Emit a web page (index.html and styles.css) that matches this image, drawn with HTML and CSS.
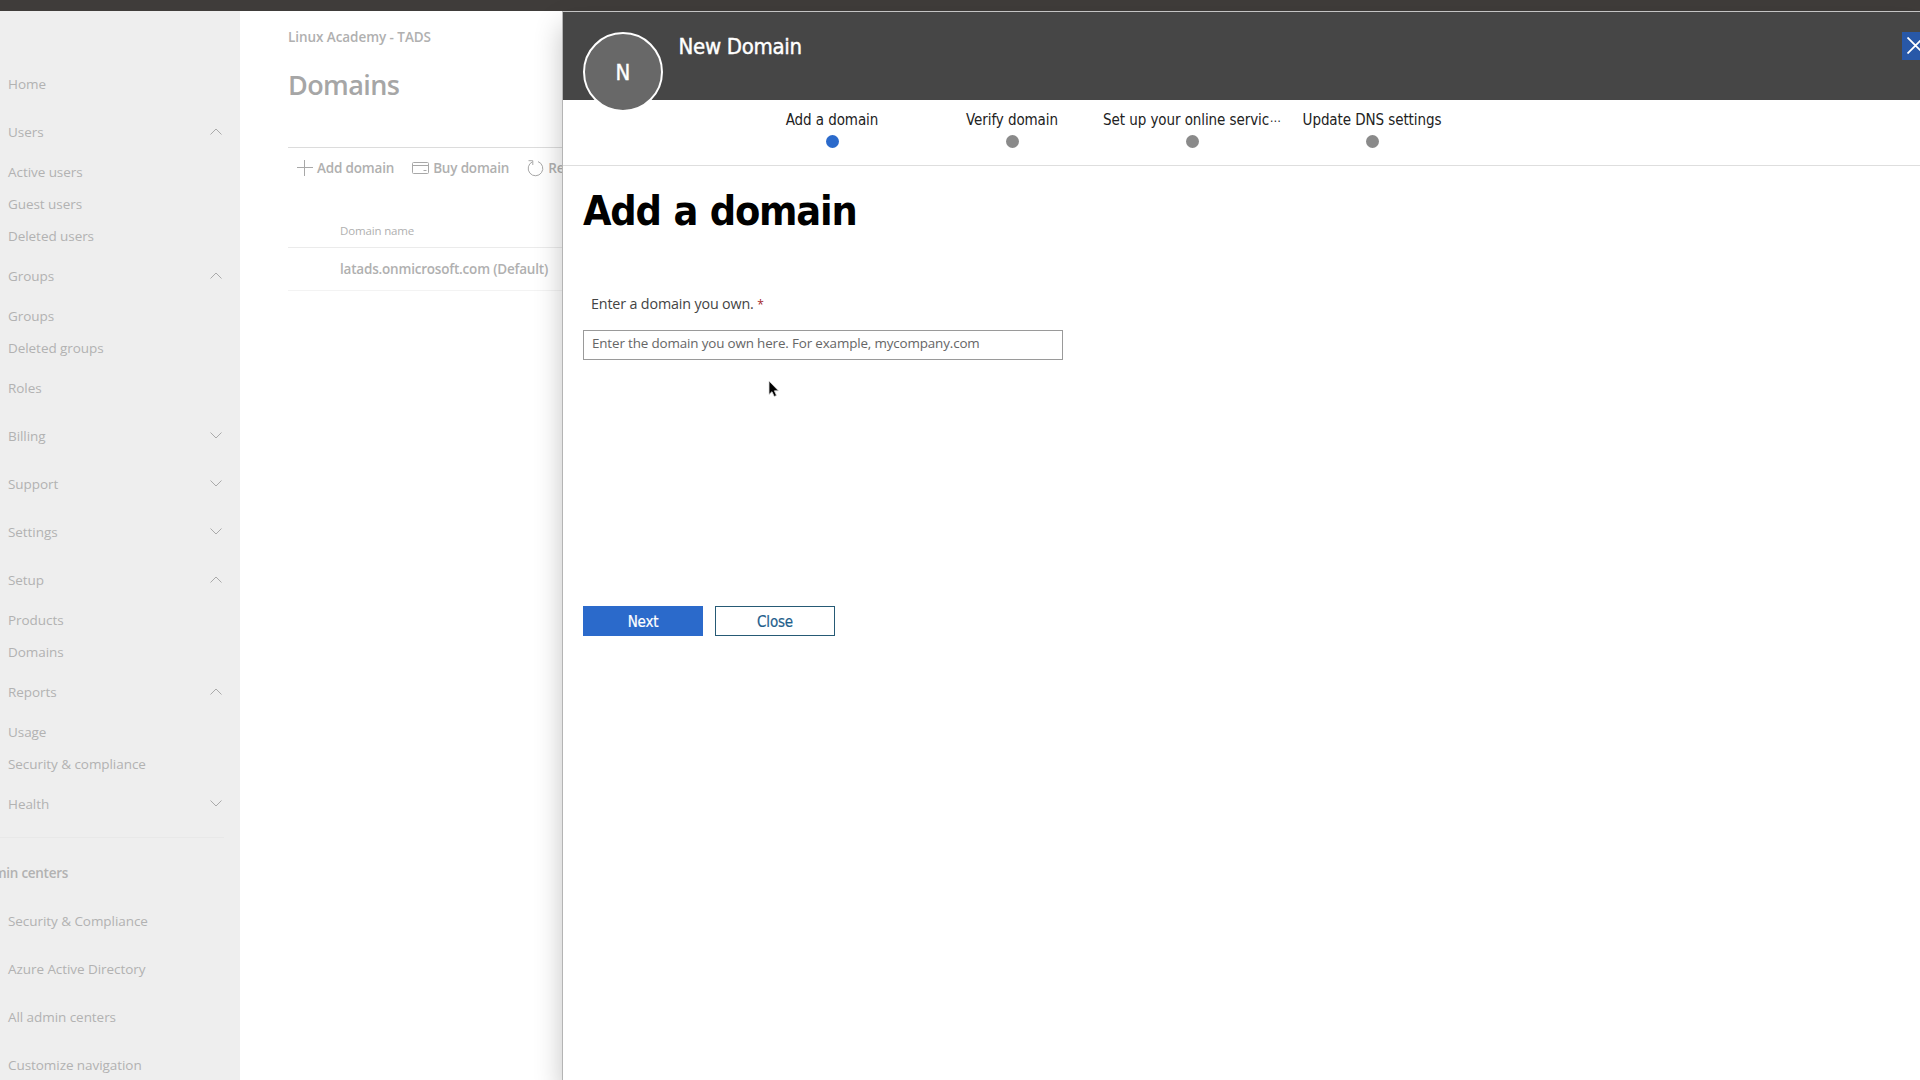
FILE: index.html
```html
<!DOCTYPE html>
<html lang="en">
<head>
<meta charset="utf-8">
<title>Domains - New Domain</title>
<link rel="stylesheet" href="styles.css">
</head>
<body>
<svg class="defs" width="0" height="0">
  <symbol id="up" viewBox="0 0 12 7"><path d="M.5 6.500 6 1l5.500 5.500"/></symbol>
  <symbol id="down" viewBox="0 0 12 7"><path d="M.5.5 6 6 11.500.5"/></symbol>
</svg>
<div class="topbar"></div>
<div class="page">
  <nav class="sidebar">
    <a class="item">Home</a>
    <a class="item">Users<svg class="chev"><use href="#up"/></svg></a>
    <a class="item sub">Active users</a>
    <a class="item sub">Guest users</a>
    <a class="item sub">Deleted users</a>
    <a class="item">Groups<svg class="chev"><use href="#up"/></svg></a>
    <a class="item sub">Groups</a>
    <a class="item sub">Deleted groups</a>
    <a class="item">Roles</a>
    <a class="item">Billing<svg class="chev"><use href="#down"/></svg></a>
    <a class="item">Support<svg class="chev"><use href="#down"/></svg></a>
    <a class="item">Settings<svg class="chev"><use href="#down"/></svg></a>
    <a class="item">Setup<svg class="chev"><use href="#up"/></svg></a>
    <a class="item sub">Products</a>
    <a class="item sub">Domains</a>
    <a class="item">Reports<svg class="chev"><use href="#up"/></svg></a>
    <a class="item sub">Usage</a>
    <a class="item sub">Security &amp; compliance</a>
    <a class="item">Health<svg class="chev"><use href="#down"/></svg></a>
    <div class="divider"></div>
    <div class="heading">Admin centers</div>
    <a class="item">Security &amp; Compliance</a>
    <a class="item">Azure Active Directory</a>
    <a class="item">All admin centers</a>
    <a class="item">Customize navigation</a>
  </nav>

  <main class="main">
    <div class="tenant">Linux Academy - TADS</div>
    <h1 class="page-title">Domains</h1>
    <div class="toolbar">
      <span class="tool"><svg width="16" height="16" viewBox="0 0 16 16"><path d="M7.500 0v16M0 7.500h16"/></svg>Add domain</span>
      <span class="tool"><svg width="17" height="12" viewBox="0 0 17 12"><rect x=".5" y=".5" width="16" height="11" rx="1"/><path d="M.5 3.500h16M11.500 8.500h3"/></svg>Buy domain</span>
      <span class="tool"><svg width="17" height="17" viewBox="0 0 17 17"><path d="M11 1.600A7.300 7.300 0 1 1 5.500 1.800M1.500.7h4.300v4.300"/></svg>Refresh</span>
    </div>
    <div class="table">
      <div class="row head">Domain name</div>
      <div class="row">latads.onmicrosoft.com (Default)</div>
    </div>
  </main>

  <section class="panel">
    <header class="panel-head">
      <div class="avatar">N</div>
      <div class="panel-name">New Domain</div>
      <button class="close-x"><svg width="17" height="17" viewBox="0 0 17 17"><path d="M.5.5l16 16M16.500.5l-16 16"/></svg></button>
    </header>
    <div class="steps">
      <div class="step active"><span class="step-label">Add a domain</span><i class="dot"></i></div>
      <div class="step"><span class="step-label">Verify domain</span><i class="dot"></i></div>
      <div class="step"><span class="step-label">Set up your online servic<span class="dots">⋯</span></span><i class="dot"></i></div>
      <div class="step"><span class="step-label">Update DNS settings</span><i class="dot"></i></div>
    </div>
    <div class="content">
      <h2 class="title">Add a domain</h2>
      <label class="label">Enter a domain you own. <span class="req">*</span></label>
      <div class="input">Enter the domain you own here. For example, mycompany.com</div>
      <div class="buttons">
        <button class="btn primary">Next</button>
        <button class="btn">Close</button>
      </div>
    </div>
  </section>
</div>
<svg class="cursor" width="12" height="18" viewBox="0 0 12 18"><path d="M1 1v13.500l3-2.800 2.200 4.800 2.300-1-2.100-4.700h4.100z"/></svg>
</body>
</html>
```
FILE: styles.css
```css
* { box-sizing: border-box; }
body {
  margin: 0;
  width: 1920px;
  height: 1080px;
  overflow: hidden;
  background: #fff;
  font-family: "Open Sans", "Noto Sans", sans-serif;
  font-size: 13.5px;
}
svg { fill: none; flex: none; }
.defs { position: absolute; }
.topbar { height: 11px; background: #3f3c3a; }
.page { display: flex; height: 1069px; }

/* left navigation */
.sidebar {
  width: 240px;
  flex: none;
  padding-top: 49px;
  background: #eee;
  color: #b2b2b2;
  overflow: hidden;
  letter-spacing: -.06px;
}
.item {
  display: flex;
  align-items: center;
  justify-content: space-between;
  height: 48px;
  padding: 0 18px 0 8px;
}
.item.sub { height: 32px; }
.chev { width: 12px; height: 7px; margin-top: -2px; stroke: #aaa; }
.divider { height: 1px; margin: 9px 16px 0 0; background: #e8e8e8; }
.heading {
  height: 59px;
  margin-left: -23px;
  padding-top: 25px;
  line-height: 20px;
  font-weight: 600;
  letter-spacing: -.28px;
  white-space: nowrap;
}

/* page behind the panel */
.main {
  width: 322px;
  flex: none;
  padding: 14px 0 0 48px;
  overflow: hidden;
  white-space: nowrap;
  font-weight: 600;
  color: #b0b0b0;
}
.tenant { line-height: 24px; letter-spacing: -.06px; }
.page-title {
  margin: 18px 0 44px;
  font-size: 27px;
  line-height: 36px;
  font-weight: 600;
  letter-spacing: -.6px;
  color: #a6a6a6;
}
.toolbar {
  display: flex;
  gap: 18px;
  height: 41px;
  padding-left: 9px;
  border-top: 1px solid #dcdcdc;
  align-items: center;
  letter-spacing: -.18px;
}
.tool { display: flex; align-items: center; gap: 4px; }
.tool svg { stroke: #a8a8a8; }
.table { margin-top: 26px; }
.row {
  height: 43px;
  padding-left: 52px;
  line-height: 43px;
  border-bottom: 1px solid #f3f3f3;
  letter-spacing: -.2px;
}
.row.head {
  height: 34px;
  line-height: 34px;
  font-size: 11.5px;
  font-weight: 400;
  letter-spacing: -.15px;
  border-color: #ebebeb;
}

/* panel */
.panel {
  position: relative;
  flex: 1;
  border-left: 1px solid #b4b4b4;
  border-top: 1px solid #c4c4c4;
  background: #fff;
  box-shadow: 0 14px 26px rgba(0, 0, 0, .23);
  font-family: "DejaVu Sans Condensed", "DejaVu Sans", sans-serif;
}
.panel-head {
  display: flex;
  align-items: flex-start;
  height: 88px;
  padding: 20px 0 0 20px;
  background: #464646;
  color: #fff;
}
.avatar {
  width: 80px;
  height: 80px;
  border: 2px solid #fff;
  border-radius: 50%;
  background: #686868;
  text-align: center;
  font-size: 22px;
  line-height: 77px;
  -webkit-text-stroke: .4px #fff;
}
.panel-name {
  flex: 1;
  margin-left: 15.5px;
  font-size: 22px;
  line-height: 29px;
  letter-spacing: -.3px;
  -webkit-text-stroke: .4px #fff;
}
.close-x {
  width: 28px;
  height: 28px;
  margin-right: -10px;
  padding: 5px 0 0 5px;
  border: 0;
  background: #2858a8;
  text-align: left;
  display: flex;
}
.close-x svg { stroke: #fff; stroke-width: 1.8; }
.steps {
  display: flex;
  height: 66px;
  padding-left: 179px;
  border-bottom: 1px solid #dedede;
}
.step {
  width: 180px;
  display: flex;
  flex-direction: column;
  align-items: center;
  font-size: 15px;
  letter-spacing: -.08px;
  color: #222;
  white-space: nowrap;
}
.step-label { height: 30px; padding-top: 10px; line-height: 20px; }
.dots { margin-left: 1px; font-size: 12px; line-height: 0; vertical-align: 0; letter-spacing: 0; }
.dot { width: 13px; height: 13px; margin-top: 5px; border-radius: 50%; background: #8a8a8a; }
.step.active .dot { background: #2b6acb; }
.content {
  display: flex;
  flex-direction: column;
  align-items: flex-start;
  padding: 20px 0 0 20px;
}
.title {
  margin: 0;
  font-size: 41px;
  line-height: 51px;
  letter-spacing: -1.2px;
  word-spacing: 1px;
  color: #000;
}
.label {
  height: 22px;
  margin: 56px 0 0 8px;
  font: 14.3px/22px "Open Sans", sans-serif;
  letter-spacing: -.15px;
  color: #444;
}
.req { font-size: 12px; line-height: 0; color: #a4262c; }
.input {
  width: 480px;
  height: 30px;
  margin-top: 15px;
  padding-left: 8px;
  border: 1px solid #9a9a9a;
  font: 13.4px/25px "Open Sans", sans-serif;
  letter-spacing: -.14px;
  color: #666;
}
.buttons { display: flex; gap: 12px; margin-top: 246px; }
.btn {
  width: 120px;
  height: 30px;
  padding: 1px 0 0;
  border: 1px solid #265a75;
  background: #fff;
  color: #1f5f8c;
  font: 15px/28px "DejaVu Sans Condensed", "DejaVu Sans", sans-serif;
  letter-spacing: -.2px;
  -webkit-text-stroke: .2px currentColor;
}
.btn.primary { border-color: #2b6acb; background: #2b6acb; color: #fff; }

.cursor { position: absolute; left: 768px; top: 380px; fill: #000; stroke: #ddd; stroke-width: .8; }
```
